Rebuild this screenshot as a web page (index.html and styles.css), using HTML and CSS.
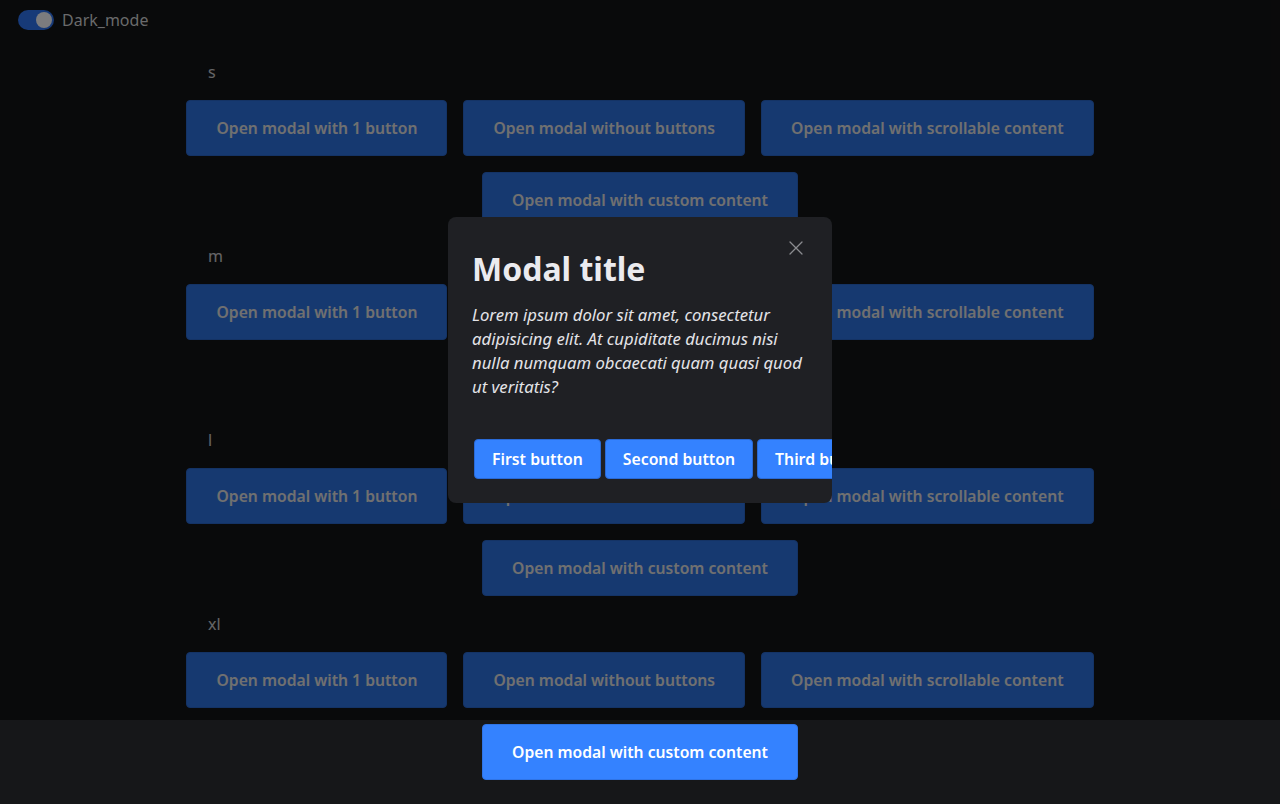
FILE: index.html
```html
<!DOCTYPE html>
<html lang="en">
<head>
<meta charset="utf-8">
<title>Modal demo</title>
<link rel="stylesheet" href="styles.css">
</head>
<body>
<header class="topbar">
  <label class="toggle">
    <span class="toggle-track"><span class="toggle-knob"></span></span>
    <span class="toggle-label">Dark_mode</span>
  </label>
</header>

<main class="page">
  <section class="size-group">
    <div class="size-label">s</div>
    <div class="btn-row">
      <button class="btn">Open modal with 1 button</button>
      <button class="btn">Open modal without buttons</button>
      <button class="btn">Open modal with scrollable content</button>
      <button class="btn">Open modal with custom content</button>
    </div>
  </section>
  <section class="size-group">
    <div class="size-label">m</div>
    <div class="btn-row">
      <button class="btn">Open modal with 1 button</button>
      <button class="btn">Open modal without buttons</button>
      <button class="btn">Open modal with scrollable content</button>
      <button class="btn">Open modal with custom content</button>
    </div>
  </section>
  <section class="size-group">
    <div class="size-label">l</div>
    <div class="btn-row">
      <button class="btn">Open modal with 1 button</button>
      <button class="btn">Open modal without buttons</button>
      <button class="btn">Open modal with scrollable content</button>
      <button class="btn">Open modal with custom content</button>
    </div>
  </section>
  <section class="size-group">
    <div class="size-label">xl</div>
    <div class="btn-row">
      <button class="btn">Open modal with 1 button</button>
      <button class="btn">Open modal without buttons</button>
      <button class="btn">Open modal with scrollable content</button>
      <button class="btn">Open modal with custom content</button>
    </div>
  </section>
</main>

<div class="overlay">
  <div class="modal" role="dialog" aria-labelledby="modal-title">
    <button class="modal-close" aria-label="Close">
      <svg width="16" height="16" viewBox="0 0 16 16" fill="none" stroke="currentColor" stroke-width="1.3" stroke-linecap="round">
        <path d="M2 2 L14 14 M14 2 L2 14"/>
      </svg>
    </button>
    <h2 class="modal-title" id="modal-title">Modal title</h2>
    <p class="modal-text">Lorem ipsum dolor sit amet, consectetur adipisicing elit. At cupiditate ducimus nisi nulla numquam obcaecati quam quasi quod ut veritatis?</p>
    <div class="modal-actions">
      <button class="modal-btn">First button</button>
      <button class="modal-btn">Second button</button>
      <button class="modal-btn">Third button</button>
    </div>
  </div>
</div>
</body>
</html>
```

FILE: styles.css
```css
* { box-sizing: border-box; }

html, body {
  margin: 0;
  padding: 0;
}

body {
  background: #161719;
  color: #ececf0;
  font-family: "Noto Sans", "Open Sans", sans-serif;
  font-size: 16px;
  min-height: 804px;
}

.topbar {
  height: 40px;
  padding: 10px 18px;
  position: relative;
  z-index: 20;
}

.toggle {
  display: inline-flex;
  align-items: center;
  gap: 8px;
  height: 20px;
}

.toggle-track {
  width: 36px;
  height: 20px;
  border-radius: 10px;
  background: #173a78;
  display: flex;
  align-items: center;
  justify-content: flex-end;
  padding: 0 2px;
}

.toggle-knob {
  width: 16px;
  height: 16px;
  border-radius: 50%;
  background: #7c7c7e;
}

.toggle-label {
  color: #6a6a6c;
  font-size: 16px;
  line-height: 20px;
}

.page {
  max-width: 1000px;
  margin: 20px auto 0;
  padding: 0 20px;
}

.size-group {
  margin-bottom: 16px;
}

.size-label {
  padding-left: 48px;
  line-height: 24px;
  height: 24px;
  margin-bottom: 16px;
  color: #e6e6ea;
}

.btn-row {
  display: flex;
  flex-wrap: wrap;
  justify-content: center;
  gap: 16px;
}

.btn {
  height: 56px;
  padding: 0 29px;
  border: 1px solid #2f74e6;
  border-radius: 4px;
  background: #3482ff;
  color: #ffffff;
  font-family: inherit;
  font-size: 15.7px;
  font-weight: 600;
  white-space: nowrap;
}

.overlay {
  position: absolute;
  top: 0;
  left: 0;
  width: 100%;
  height: 720px;
  background: rgba(0, 0, 0, 0.56);
  display: flex;
  align-items: center;
  justify-content: center;
  z-index: 10;
}

.modal {
  position: relative;
  width: 384px;
  background: #1f2024;
  border-radius: 8px;
  padding: 32px 24px 24px;
  overflow: hidden;
}

.modal-close {
  position: absolute;
  top: 23px;
  right: 28px;
  width: 16px;
  height: 16px;
  padding: 0;
  border: 0;
  background: none;
  color: #8b8c90;
  display: flex;
}

.modal-title {
  margin: 0 0 14px;
  font-size: 32px;
  line-height: 40px;
  font-weight: 700;
  color: #ebebef;
}

.modal-text {
  margin: 0;
  font-size: 16.7px;
  line-height: 24px;
  font-style: italic;
  color: #e4e4e8;
}

.modal-actions {
  display: flex;
  margin-top: 40px;
}

.modal-btn {
  flex: none;
  height: 40px;
  margin: 0 2px;
  padding: 0 17px;
  border: 1px solid #2a6ad6;
  border-radius: 4px;
  background: #3482ff;
  color: #ffffff;
  font-family: inherit;
  font-size: 15.8px;
  font-weight: 600;
  white-space: nowrap;
}
```
